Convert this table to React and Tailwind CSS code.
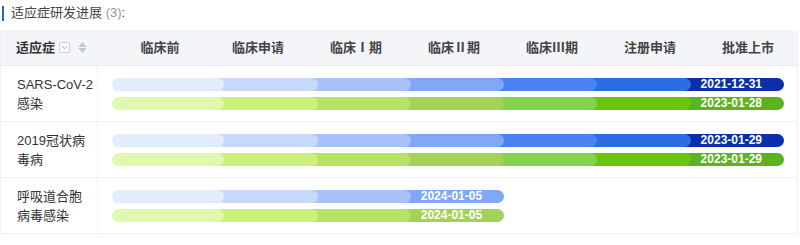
import React from "react";

const BLUE = ["#e2ecfd", "#c6d9fb", "#a7c3fa", "#7fa8f7", "#4a82f3", "#2e6be6", "#0a2fa6"];
const GREEN = ["#e0f8b0", "#ccf07c", "#b7e363", "#a4d157", "#85d24f", "#6cc40e", "#5bb322"];
const STAGES = ["临床前", "临床申请", "临床Ⅰ期", "临床Ⅱ期", "临床Ⅲ期", "注册申请", "批准上市"];

const rows = [
  { name: "SARS-CoV-2感染", blue: [7, "2021-12-31"], green: [7, "2023-01-28"] },
  { name: "2019冠状病毒病", blue: [7, "2023-01-29"], green: [7, "2023-01-29"] },
  { name: "呼吸道合胞病毒感染", blue: [4, "2024-01-05"], green: [4, "2024-01-05"] },
];

const CAP = 19;
const TOTAL = 672;
const STEP = (TOTAL - CAP) / 7;
const OVER = 10;

function Bar({ colors, n, label }) {
  const segs = [];
  for (let k = 1; k <= n; k++) {
    const w = k === 1 ? CAP + STEP : STEP + OVER;
    segs.push(
      <div
        key={k}
        className={k === 1 ? "relative h-full shrink-0 rounded-full" : "relative h-full shrink-0 rounded-r-full -ml-[10px]"}
        style={{ width: w, background: colors[k - 1], zIndex: 10 - k }}
      />
    );
  }
  return (
    <div className="relative flex h-[13px]" style={{ width: CAP + n * STEP }}>
      {segs}
      <span className="absolute z-20 right-[22px] top-0 h-[13px] leading-[13px] text-[12px] font-bold text-white">
        {label}
      </span>
    </div>
  );
}

export default function App() {
  return (
    <div
      className="w-[800px] h-[245px] bg-white text-[#333]"
      style={{ fontFamily: '"Liberation Sans", "Noto Sans CJK SC", sans-serif' }}
    >
      <div className="flex items-center h-[25px] pt-[1px] pl-[2px]">
        <div className="w-[2px] h-[15px] bg-[#2a5fd8]" />
        <div className="ml-[7px] text-[13px] text-[#444]">
          适应症研发进展 <span className="text-[#8e98ab]">(3)</span>:
        </div>
      </div>
      <div className="mt-[5px] w-[798px] border-l border-r border-[#eef0f4]">
        <div className="flex h-[36px] items-center bg-[#f3f5f9] border-b border-[#e8ebf1]">
          <div className="w-[110px] flex items-center pl-[15px] text-[13px] font-bold text-[#333]">
            <span>适应症</span>
            <span className="ml-[4px] w-[11px] h-[11px] border border-[#c9ced8] rounded-[2px] bg-white flex items-center justify-center">
              <svg width="7" height="5" viewBox="0 0 7 5">
                <path d="M0.8 1 L3.5 3.7 L6.2 1" fill="none" stroke="#9aa3b3" strokeWidth="1" />
              </svg>
            </span>
            <span className="ml-[8px] flex flex-col gap-[1px]">
              <svg width="9" height="5" viewBox="0 0 9 5"><path d="M4.5 0 L9 5 L0 5Z" fill="#c4c9d2" /></svg>
              <svg width="9" height="5" viewBox="0 0 9 5"><path d="M0 0 L9 0 L4.5 5Z" fill="#c4c9d2" /></svg>
            </span>
          </div>
          {STAGES.map((s) => (
            <div key={s} className="w-[98px] text-center text-[13px] font-bold text-[#444]">
              {s}
            </div>
          ))}
        </div>
        {rows.map((r, i) => (
          <div key={i} className="flex h-[56px] border-b border-[#eef0f4]">
            <div className="w-[97px] shrink-0 border-r border-[#eef0f4] pl-[16px] pr-[3px] flex items-center text-[13px] leading-[19px] text-[#333] break-all">
              {r.name}
            </div>
            <div className="flex flex-col justify-center gap-[6px] pl-[14px]">
              <Bar colors={BLUE} n={r.blue[0]} label={r.blue[1]} />
              <Bar colors={GREEN} n={r.green[0]} label={r.green[1]} />
            </div>
          </div>
        ))}
      </div>
    </div>
  );
}
